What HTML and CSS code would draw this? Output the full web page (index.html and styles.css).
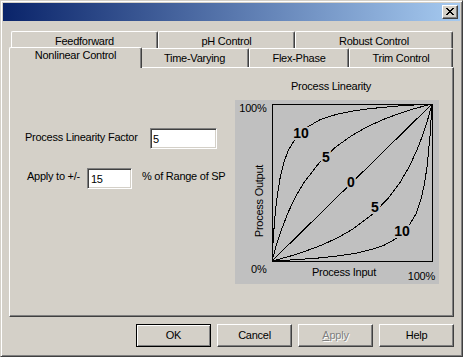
FILE: index.html
```html
<!DOCTYPE html>
<html lang="en">
<head>
    <meta charset="UTF-8">
    <meta name="viewport" content="width=device-width, initial-scale=1.0">
    <title>Nonlinear Control</title>
    <link rel="stylesheet" href="styles.css">
</head>
<body>

<div class="dialog">
    <div class="titlebar">
        <span class="close-btn">
            <svg width="8" height="7" viewBox="0 0 8 7">
                <path d="M0 0h2v1h-2z M6 0h2v1h-2z M1 1h2v1h-2z M5 1h2v1h-2z M2 2h4v1h-4z M3 3h2v1h-2z M2 4h4v1h-4z M1 5h2v1h-2z M5 5h2v1h-2z M0 6h2v1h-2z M6 6h2v1h-2z" fill="#000"/>
            </svg>
        </span>
    </div>

    <div class="tabs">
        <div class="tab-row back-row">
            <div class="tab tab-feed">Feedforward</div>
            <div class="tab tab-ph">pH Control</div>
            <div class="tab tab-robust">Robust Control</div>
        </div>
        <div class="tab-row front-row">
            <div class="tab tab-nonlinear active">Nonlinear Control</div>
            <div class="tab tab-time">Time-Varying</div>
            <div class="tab tab-flex">Flex-Phase</div>
            <div class="tab tab-trim">Trim Control</div>
        </div>
    </div>

    <div class="panel">
        <div class="settings">
            <div class="field-row factor-row">
                <label class="field-label" for="factor">Process Linearity Factor</label>
                <input class="edit" type="text" id="factor" value="5">
            </div>
            <div class="field-row apply-row">
                <label class="field-label" for="range">Apply to +/-</label>
                <input class="edit short" type="text" id="range" value="15">
                <span class="unit">% of Range of SP</span>
            </div>
        </div>

        <div class="chart">
            <div class="chart-title">Process Linearity</div>
            <svg class="chart-plot" width="204" height="184" viewBox="0 0 204 184">
                <!-- axes box -->
                <rect x="37.5" y="4.5" width="160" height="157" fill="none" stroke="#000" shape-rendering="crispEdges"/>

                <!-- curves: factor 10, 5, 0, -5, -10 -->
                <g fill="none" stroke="#000" stroke-width="1" shape-rendering="crispEdges">
                    <polyline points="37,161 37.3,154.7 37.8,146 38.6,133.5 40.2,113.9 41.8,99.2 45,78.6 49,62.1 53,51.1 61,37.4 69,29.1 85,19.7 101,14.5 117,11.1 133,8.8 165,5.8 197,4"/>
                    <polyline points="37,161 41,146.4 45,133.7 53,112.7 61,96 69,82.5 85,61.8 101,46.8 117,35.4 133,26.4 149,19.2 165,13.2 181,8.2 197,4"/>
                    <polyline points="37,161 197,4"/>
                    <polyline points="37,161 51.9,157.1 64.8,153.2 86.3,145.3 103.2,137.5 117,129.6 138.1,113.9 153.3,98.2 165,82.5 174.1,66.8 181.5,51.1 187.6,35.4 192.7,19.7 197,4"/>
                    <polyline points="37,161 43.5,160.7 52.3,160.2 65,159.4 85,157.9 100,156.3 121,153.2 137.8,149.2 149,145.3 163,137.5 171.4,129.6 181,113.9 186.3,98.2 189.7,82.5 192,66.8 195.1,35.4 197,4"/>
                </g>

                <text class="curve-label" x="66" y="38">10</text>
                <text class="curve-label" x="91" y="62">5</text>
                <text class="curve-label" x="116" y="87">0</text>
                <text class="curve-label" x="140" y="112">5</text>
                <text class="curve-label" x="167" y="136">10</text>

                <text class="axis-label" x="31.5" y="12" text-anchor="end">100%</text>
                <text class="axis-label" x="31.5" y="173" text-anchor="end">0%</text>
                <text class="axis-label" x="109" y="176" text-anchor="middle">Process Input</text>
                <text class="axis-label" x="200" y="179.5" text-anchor="end">100%</text>
                <text class="axis-label" transform="translate(28 101) rotate(-90)" text-anchor="middle">Process Output</text>
            </svg>
        </div>
    </div>

    <div class="buttons">
        <button class="btn default">OK</button>
        <button class="btn">Cancel</button>
        <button class="btn" disabled><u>A</u>pply</button>
        <button class="btn">Help</button>
    </div>
</div>

</body>
</html>
```

FILE: styles.css
```css
body {
    margin: 0;
    padding: 0;
    background-color: #d4d0c8;
    font: 11px/13px "Liberation Sans", Arial, sans-serif;
    letter-spacing: -0.25px;
    color: #000;
}

.dialog {
    width: 463px;
    height: 357px;
    box-sizing: border-box;
    padding: 1px;
    background-color: #d4d0c8;
    border: 1px solid;
    border-color: #d4d0c8 #404040 #404040 #d4d0c8;
    box-shadow: inset 1px 1px #fff, inset -1px -1px #808080;
    display: flex;
    flex-direction: column;
}

/* title bar */
.titlebar {
    height: 18px;
    margin: 1px;
    padding-right: 2px;
    background: linear-gradient(to right, #0a246a, #a6caf0);
    display: flex;
    justify-content: flex-end;
    align-items: center;
}

.close-btn {
    width: 16px;
    height: 14px;
    box-sizing: border-box;
    padding: 2px 0 0 3px;
    background-color: #d4d0c8;
    border: 1px solid;
    border-color: #fff #404040 #404040 #fff;
    box-shadow: inset -1px -1px #808080;
    display: flex;
    align-items: flex-start;
}

.close-btn svg {
    display: block;
}

/* tabs */
.tabs {
    margin: 9px 8px 0 9px;
}

.tab-row {
    display: flex;
}

.back-row {
    height: 17px;
}

.front-row {
    height: 19px;
    align-items: flex-end;
}

.tab {
    box-sizing: border-box;
    height: 100%;
    flex-shrink: 0;
    padding-top: 3px;
    background-color: #d4d0c8;
    border: 1px solid;
    border-bottom: none;
    border-color: #fff #404040 #404040 #fff;
    border-radius: 2px 2px 0 0;
    box-shadow: inset -1px 0 #808080;
    text-align: center;
    white-space: nowrap;
}

.tab-feed { width: 147px; }
.tab-ph { width: 137px; }
.tab-robust { width: 158px; }
.tab-nonlinear { width: 133px; }
.tab-time { width: 109px; }
.tab-flex { width: 100px; }
.tab-trim { width: 104px; }

.tab.active {
    height: 21px;
    padding-top: 1px;
    margin: 0 -2px -1px -2px;
    position: relative;
    z-index: 1;
}

/* page body */
.panel {
    height: 250px;
    box-sizing: border-box;
    margin: 0 7px;
    border: 1px solid;
    border-color: #fff #404040 #404040 #fff;
    box-shadow: inset -1px -1px #808080;
    display: flex;
}

.settings {
    width: 225px;
    box-sizing: border-box;
    padding: 60px 0 0 15px;
}

.field-row {
    display: flex;
    align-items: flex-start;
    height: 21px;
}

.factor-row .field-label {
    width: 125px;
    padding-top: 3px;
}

.apply-row {
    margin-top: 19px;
    padding-left: 2px;
}

.apply-row .field-label {
    width: 60px;
    padding-top: 2px;
}

.unit {
    margin-left: 10px;
    padding-top: 2px;
}

.edit {
    width: 67px;
    height: 21px;
    box-sizing: border-box;
    margin: 0;
    padding: 0 2px;
    font: inherit;
    letter-spacing: inherit;
    color: #000;
    background-color: #fff;
    border: 1px solid;
    border-color: #808080 #fff #fff #808080;
    box-shadow: inset 1px 1px #404040, inset -1px -1px #d4d0c8;
    outline: none;
}

.edit.short {
    width: 45px;
    padding-left: 3px;
}

/* chart */
.chart {
    width: 204px;
    padding-top: 12px;
}

.chart-title {
    height: 13px;
    margin-bottom: 7px;
    padding-right: 12px;
    text-align: center;
}

.chart-plot {
    display: block;
    background-color: #c0c0c0;
}

.axis-label {
    font-family: "Liberation Sans", Arial, sans-serif;
    font-size: 11px;
    fill: #000;
}

.curve-label {
    font-family: "Liberation Sans", Arial, sans-serif;
    font-size: 14px;
    font-weight: bold;
    letter-spacing: 0;
    text-anchor: middle;
    fill: #000;
    stroke: #c0c0c0;
    stroke-width: 4px;
    paint-order: stroke;
}

/* dialog buttons */
.buttons {
    display: flex;
    justify-content: flex-end;
    gap: 6px;
    margin: 7px 7px 0 0;
}

.btn {
    width: 75px;
    height: 23px;
    box-sizing: border-box;
    margin: 0;
    padding: 0;
    font: inherit;
    letter-spacing: inherit;
    color: #000;
    background-color: #d4d0c8;
    border: 1px solid;
    border-color: #fff #404040 #404040 #fff;
    box-shadow: inset -1px -1px #808080;
    border-radius: 0;
}

.btn.default {
    border-color: #000;
    box-shadow: inset 1px 1px #fff, inset -1px -1px #808080;
}

.btn:disabled {
    color: #808080;
    text-shadow: 1px 1px #fff;
}
```
